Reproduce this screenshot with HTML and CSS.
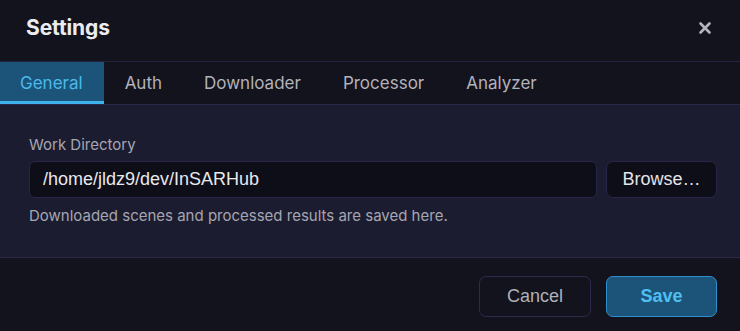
FILE: index.html
```html
<!DOCTYPE html>
<html>
<head>
<meta charset="utf-8">
<link rel="stylesheet" href="styles.css">
</head>
<body>
<div class="dialog">
  <header class="head">
    <h1 class="title">Settings</h1>
    <button class="close" aria-label="Close">
      <svg width="14" height="14" viewBox="0 0 14 14"><path d="M2.5 2.5L11.5 11.5M11.5 2.5L2.5 11.5" stroke="#b4b4bc" stroke-width="2.6" stroke-linecap="round"/></svg>
    </button>
  </header>
  <nav class="tabs">
    <div class="tab active">General</div>
    <div class="tab">Auth</div>
    <div class="tab">Downloader</div>
    <div class="tab">Processor</div>
    <div class="tab">Analyzer</div>
  </nav>
  <main class="body">
    <label class="label">Work Directory</label>
    <div class="row">
      <input class="input" type="text" value="/home/jldz9/dev/InSARHub">
      <button class="btn browse">Browse…</button>
    </div>
    <p class="hint">Downloaded scenes and processed results are saved here.</p>
  </main>
  <footer class="foot">
    <button class="btn cancel">Cancel</button>
    <button class="btn save">Save</button>
  </footer>
</div>
</body>
</html>
```
FILE: styles.css
```css
* { box-sizing: border-box; }
html, body { margin: 0; padding: 0; background: #13131e; }
body { font-family: Inter, "Noto Sans", sans-serif; color: #e6e6ea; }
.dialog { width: 740px; height: 331px; display: flex; flex-direction: column; background: #13131e; }
.head { height: 62px; display: flex; align-items: center; justify-content: space-between; padding: 0 24px 6px 26px; border-bottom: 1px solid #25233d; }
.title { margin: 0; font-size: 21px; font-weight: 700; color: #ececf0; letter-spacing: -0.1px; }
.close { background: none; border: 0; padding: 4px; display: flex; cursor: pointer; }
.tabs { display: flex; height: 43px; border-bottom: 1px solid #2a2748; }
.tab { padding: 2px 21px 0 21px; display: flex; align-items: center; font-size: 17px; color: #b2b2ba; border-bottom: 3px solid transparent; }
.tab.active { background: #1b5478; color: #4cb8ec; border-bottom-color: #3db2ec; padding-left: 20px; }
.body { background: #1b1c2f; height: 153px; padding: 30px 23px 0 29px; border-bottom: 1px solid #2a2a44; display: flex; flex-direction: column; }
.label { font-size: 15px; color: #a6a6b2; line-height: 19px; }
.row { display: flex; gap: 9px; margin-top: 7px; }
.input { flex: 1; height: 37px; background: #0e0e18; border: 1px solid #27264a; border-radius: 6px; color: #e8e8ec; font-family: "Liberation Sans", Arial, sans-serif; font-size: 18px; padding: 0 13px; outline: none; }
.btn { font-family: "Liberation Sans", Arial, sans-serif; font-size: 18px; border-radius: 7px; cursor: pointer; padding: 0; }
.browse { width: 111px; height: 37px; background: #0e0e18; border: 1px solid #27264a; color: #e4e4ea; }
.hint { margin: 8px 0 0; font-size: 15px; color: #a6a6b2; }
.foot { flex: 1; display: flex; justify-content: flex-end; align-items: flex-start; gap: 15px; padding: 18px 23px 0 0; }
.cancel { width: 112px; height: 41px; background: transparent; border: 1px solid #2e2a4e; color: #b0b0b8; }
.save { width: 111px; height: 41px; background: #1b5478; border: 1px solid #2f8fcf; color: #4fbff2; font-weight: 700; }
```
